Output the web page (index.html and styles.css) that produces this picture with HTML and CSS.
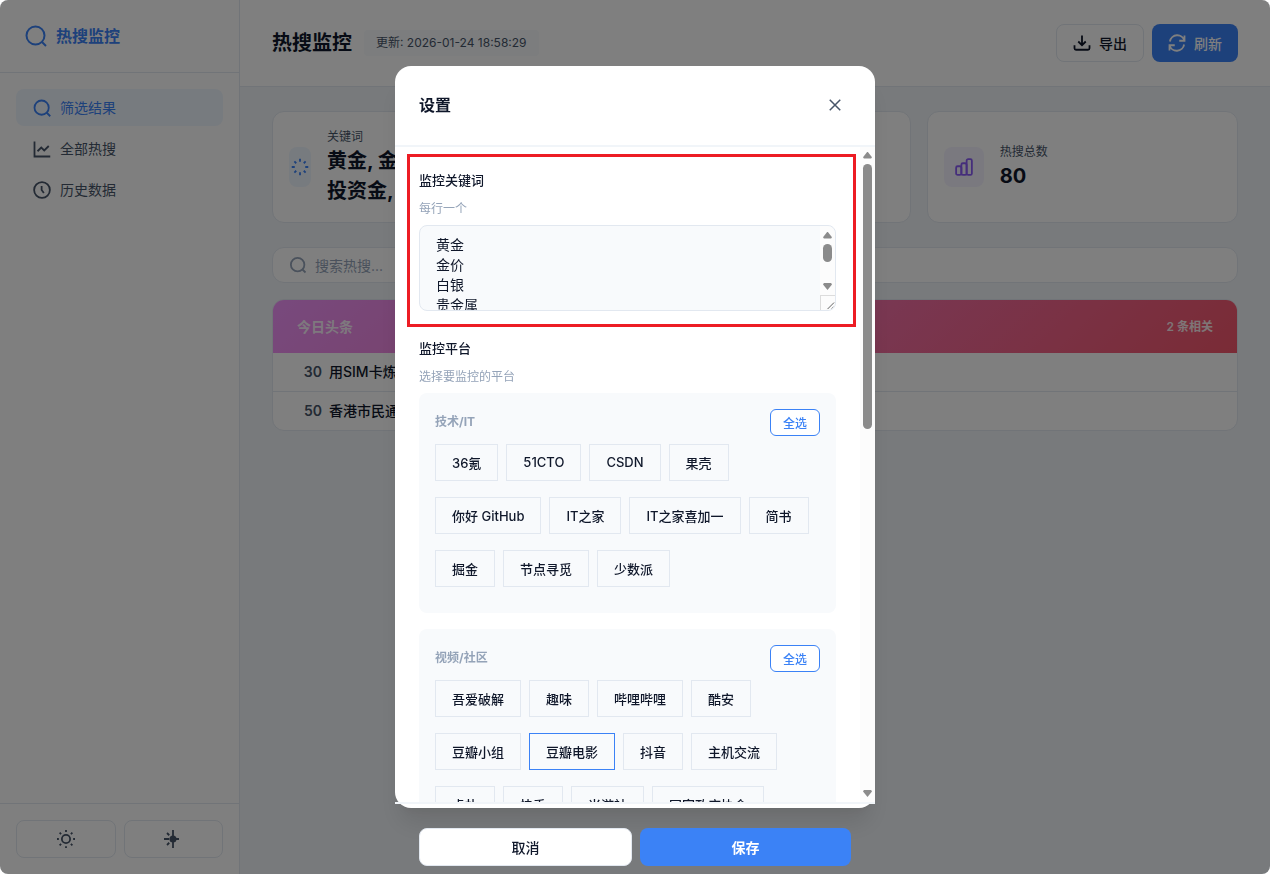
FILE: index.html
```html
<!DOCTYPE html>
<html lang="zh-CN">
<head>
    <meta charset="UTF-8">
    <meta name="viewport" content="width=device-width, initial-scale=1.0">
    <title>热搜监控</title>
    <link rel="stylesheet" href="styles.css">
</head>
<body>
    <div class="app">
        <aside class="sidebar">
            <div class="logo">
                <svg class="logo-icon" viewBox="0 0 24 24"><circle cx="11.5" cy="11.5" r="9"/><path d="M18 18L22 22"/></svg>
                <span>热搜监控</span>
            </div>
            <nav class="nav">
                <a href="#" class="nav-item active">
                    <svg class="icon" viewBox="0 0 24 24"><circle cx="11.5" cy="11.5" r="9.5"/><path d="M18 18L23 23"/></svg>
                    筛选结果
                </a>
                <a href="#" class="nav-item">
                    <svg class="icon" viewBox="0 0 24 24"><path d="M2 2v20h21"/><path d="M6 15l5-5 4 4 6-6"/></svg>
                    全部热搜
                </a>
                <a href="#" class="nav-item">
                    <svg class="icon" viewBox="0 0 24 24"><circle cx="12" cy="12" r="10.5"/><path d="M11.500 6.500v5.500l3 4"/></svg>
                    历史数据
                </a>
            </nav>
            <div class="sidebar-footer">
                <button class="btn tool-btn" aria-label="主题">
                    <svg class="icon" viewBox="0 0 24 24"><circle cx="12" cy="12" r="5.500"/><path d="M12 0v2.500M12 21.500v2.500M0 12h2.500M21.500 12h2.500M3.500 3.500l2 2M18.500 18.500l2 2M3.500 20.500l2-2M18.500 5.500l2-2"/></svg>
                </button>
                <button class="btn tool-btn" aria-label="设置">
                    <svg class="icon" viewBox="0 0 24 24"><circle cx="12" cy="12" r="3.500" fill="currentColor"/><path d="M12 0v24M0 12h7M12 12h8M4 4l3 3M4 20l3-3"/></svg>
                </button>
            </div>
        </aside>

        <main class="main">
            <header class="header">
                <h1>热搜监控</h1>
                <span class="update-time">更新: 2026-01-24 18:58:29</span>
                <div class="header-actions">
                    <button class="btn">
                        <svg class="icon" viewBox="0 0 24 24"><path d="M12 2v13M7 10l5 5 5-5M2 15v4a2 2 0 0 0 2 2h16a2 2 0 0 0 2-2v-4"/></svg>
                        导出
                    </button>
                    <button class="btn btn-primary">
                        <svg class="icon" viewBox="0 0 24 24"><path d="M22 2v7h-7M22 9A10 10 0 0 0 2.500 10M2 22v-7h7M2 15a10 10 0 0 0 19.500-1"/></svg>
                        刷新
                    </button>
                </div>
            </header>

            <div class="content">
                <div class="stats">
                    <div class="stat-card">
                        <div class="stat-icon narrow">
                            <svg class="icon" viewBox="0 0 24 24"><path d="M12 1v4M12 19v4M1 12h4M19 12h4M4.500 4.500L7 7M17 17l2.500 2.500M4.500 19.500L7 17M17 7l2.500-2.500"/></svg>
                        </div>
                        <div>
                            <div class="stat-label">关键词</div>
                            <div class="stat-value">黄金, 金价, 白银, 贵金属,<br>投资金, 金条</div>
                        </div>
                    </div>
                    <div class="stat-card"></div>
                    <div class="stat-card">
                        <div class="stat-icon purple">
                            <svg class="icon" viewBox="0 0 24 24"><rect x="1.500" y="11" width="7" height="11.500" rx="2"/><rect x="8.500" y="7" width="7" height="15.500" rx="2"/><rect x="15.500" y="1.500" width="7" height="21" rx="2"/></svg>
                        </div>
                        <div>
                            <div class="stat-label">热搜总数</div>
                            <div class="stat-value">80</div>
                        </div>
                    </div>
                </div>

                <div class="search">
                    <svg class="icon" viewBox="0 0 24 24"><circle cx="11.5" cy="11.5" r="9"/><path d="M18 18L22 22"/></svg>
                    <input type="text" placeholder="搜索热搜..." aria-label="搜索热搜">
                </div>

                <section class="panel">
                    <div class="panel-header">
                        <h2>今日头条</h2>
                        <span>2 条相关</span>
                    </div>
                    <div class="hot-item"><span class="rank">30</span><a href="#">用SIM卡炼金</a></div>
                    <div class="hot-item"><span class="rank">50</span><a href="#">香港市民通宵</a></div>
                </section>
            </div>
        </main>
    </div>

    <div class="overlay">
        <div class="modal" role="dialog" aria-labelledby="modal-title">
            <div class="modal-header">
                <h3 id="modal-title">设置</h3>
                <button class="close-btn" aria-label="关闭">
                    <svg viewBox="0 0 24 24"><path d="M5 5l14 14M19 5L5 19"/></svg>
                </button>
            </div>
            <div class="modal-scroll">
                <div class="modal-body">
                    <div class="form-group highlight">
                        <label for="keywords">监控关键词</label>
                        <p class="hint">每行一个</p>
                        <div class="textarea-wrap">
                            <textarea id="keywords">黄金
金价
白银
贵金属
投资金</textarea>
                            <div class="scrollbar small" aria-hidden="true">
                                <i class="arrow up"></i>
                                <i class="thumb"></i>
                                <i class="arrow down"></i>
                                <svg class="resizer" viewBox="0 0 15 15"><path d="M7 14l7-7M11 14l3-3"/></svg>
                            </div>
                        </div>
                    </div>
                    <div class="form-group">
                        <div class="label">监控平台</div>
                        <p class="hint">选择要监控的平台</p>
                        <div class="category">
                            <div class="category-header">
                                <h4>技术/IT</h4>
                                <button class="select-all">全选</button>
                            </div>
                            <div class="chips">
                                <button class="chip">36氪</button>
                                <button class="chip">51CTO</button>
                                <button class="chip">CSDN</button>
                                <button class="chip">果壳</button>
                                <button class="chip">你好 GitHub</button>
                                <button class="chip">IT之家</button>
                                <button class="chip">IT之家喜加一</button>
                                <button class="chip">简书</button>
                                <button class="chip">掘金</button>
                                <button class="chip">节点寻觅</button>
                                <button class="chip">少数派</button>
                            </div>
                        </div>
                        <div class="category">
                            <div class="category-header">
                                <h4>视频/社区</h4>
                                <button class="select-all">全选</button>
                            </div>
                            <div class="chips">
                                <button class="chip">吾爱破解</button>
                                <button class="chip">趣味</button>
                                <button class="chip">哔哩哔哩</button>
                                <button class="chip">酷安</button>
                                <button class="chip">豆瓣小组</button>
                                <button class="chip current">豆瓣电影</button>
                                <button class="chip">抖音</button>
                                <button class="chip">主机交流</button>
                                <button class="chip">虎扑</button>
                                <button class="chip">快手</button>
                                <button class="chip">米游社</button>
                                <button class="chip">国家政府协会</button>
                            </div>
                        </div>
                    </div>
                </div>
                <div class="scrollbar" aria-hidden="true">
                    <i class="arrow up"></i>
                    <i class="thumb"></i>
                    <i class="arrow down"></i>
                </div>
            </div>
            <div class="modal-footer">
                <button class="btn">取消</button>
                <button class="btn btn-primary">保存</button>
            </div>
        </div>
    </div>
</body>
</html>
```
FILE: styles.css
```css
* {
    box-sizing: border-box;
    margin: 0;
    padding: 0;
}

body {
    font-family: Inter, "Noto Sans CJK SC", sans-serif;
    font-size: 14px;
    line-height: 20px;
    color: #0f172a;
    background: #fff;
}

button, input, textarea {
    font-family: inherit;
    color: inherit;
}

button {
    cursor: pointer;
}

a {
    color: inherit;
    text-decoration: none;
}

svg {
    fill: none;
    stroke: currentColor;
    stroke-width: 2;
    flex-shrink: 0;
}

.icon {
    width: 18px;
    height: 18px;
    stroke-width: 2.4;
}

.app {
    display: flex;
    height: 100vh;
    background: #f1f5f9;
    border-radius: 8px;
    overflow: hidden;
}

/* sidebar */
.sidebar {
    display: flex;
    flex-direction: column;
    width: 240px;
    flex-shrink: 0;
    background: #fff;
    border-right: 1px solid #e2e8f0;
}

.logo {
    display: flex;
    align-items: center;
    gap: 8px;
    height: 73px;
    padding: 0 24px;
    border-bottom: 1px solid #e2e8f0;
    color: #3b82f6;
    font-size: 16px;
    font-weight: 700;
}

.logo-icon {
    width: 24px;
    height: 24px;
}

.nav {
    flex: 1;
    display: flex;
    flex-direction: column;
    gap: 4px;
    padding: 16px;
}

.nav-item {
    display: flex;
    align-items: center;
    gap: 9px;
    height: 37px;
    padding: 0 17px;
    border-radius: 8px;
    color: #475569;
}

.nav-item.active {
    background: #eff6ff;
    color: #3b82f6;
}

.sidebar-footer {
    display: flex;
    gap: 8px;
    padding: 16px;
    border-top: 1px solid #e2e8f0;
}

.btn {
    display: flex;
    align-items: center;
    justify-content: center;
    gap: 8px;
    height: 38px;
    padding: 0 16px;
    background: #fff;
    border: 1px solid #e2e8f0;
    border-radius: 8px;
    font-size: 14px;
    font-weight: 500;
}

.btn-primary {
    background: #3b82f6;
    border: none;
    color: #fff;
}

.tool-btn {
    flex: 1;
    color: #475569;
}

/* main */
.main {
    flex: 1;
    min-width: 0;
}

.header {
    display: flex;
    align-items: center;
    gap: 12px;
    padding: 24px 32px;
    background: #fff;
    border-bottom: 1px solid #e2e8f0;
}

.header h1 {
    font-size: 20px;
    line-height: 24px;
    font-weight: 700;
}

.update-time {
    padding: 3px 12px;
    background: #f8fafc;
    border-radius: 4px;
    color: #475569;
    font-size: 12px;
}

.header-actions {
    display: flex;
    gap: 8px;
    margin-left: auto;
}

.content {
    padding: 24px 32px;
}

.stats {
    display: grid;
    grid-template-columns: repeat(3, 1fr);
    gap: 16px;
    margin-bottom: 24px;
}

.stat-card {
    display: flex;
    align-items: center;
    gap: 16px;
    padding: 16px;
    background: #fff;
    border: 1px solid #e2e8f0;
    border-radius: 12px;
}

.stat-icon {
    display: flex;
    align-items: center;
    justify-content: center;
    flex-shrink: 0;
    width: 40px;
    height: 40px;
    background: #eff6ff;
    border-radius: 8px;
    color: #3b82f6;
}

.stat-icon.narrow {
    width: 22px;
}

.stat-icon.purple {
    background: #f5f3ff;
    color: #8b5cf6;
}

.stat-label {
    font-size: 12px;
    line-height: 18px;
    color: #475569;
}

.stat-value {
    font-size: 20px;
    line-height: 30px;
    font-weight: 700;
    white-space: nowrap;
}

.search {
    display: flex;
    align-items: center;
    gap: 8px;
    height: 36px;
    padding: 0 16px;
    margin-bottom: 16px;
    background: #fff;
    border: 1px solid #e2e8f0;
    border-radius: 12px;
    color: #94a3b8;
}

.search input {
    flex: 1;
    border: none;
    outline: none;
    background: none;
    font-size: 14px;
}

.search input::placeholder {
    color: #94a3b8;
}

.panel {
    background: #fff;
    border: 1px solid #e2e8f0;
    border-radius: 12px;
    overflow: hidden;
}

.panel-header {
    display: flex;
    align-items: center;
    justify-content: space-between;
    height: 53px;
    padding: 0 24px;
    background: linear-gradient(135deg, #f093fb, #f5576c);
    color: rgba(255, 255, 255, 0.9);
    font-size: 12px;
    font-weight: 600;
}

.panel-header h2 {
    font-size: 14px;
    font-weight: 700;
}

.hot-item {
    display: flex;
    align-items: center;
    box-sizing: content-box;
    height: 38px;
    padding: 0 24px;
    font-weight: 500;
}

.hot-item + .hot-item {
    border-top: 1px solid #e2e8f0;
}

.rank {
    width: 32px;
    padding-right: 7px;
    text-align: right;
    color: #475569;
    font-weight: 600;
}

/* settings dialog */
.overlay {
    position: fixed;
    inset: 0;
    display: flex;
    align-items: center;
    justify-content: center;
    background: rgba(0, 0, 0, 0.5);
    border-radius: 8px;
}

.modal {
    width: 480px;
    height: 85vh;
    background: #fff;
    border-radius: 16px;
    box-shadow: 0 20px 25px -5px rgba(0, 0, 0, 0.1), 0 10px 10px -5px rgba(0, 0, 0, 0.04);
}

.modal-header {
    display: flex;
    align-items: center;
    justify-content: space-between;
    height: 81px;
    padding: 0 24px;
    border-bottom: 2px solid #f1f5f9;
}

.modal-header h3 {
    font-size: 16px;
    font-weight: 600;
}

.close-btn {
    display: flex;
    align-items: center;
    justify-content: center;
    width: 32px;
    height: 32px;
    background: none;
    border: none;
    color: #475569;
}

.close-btn svg {
    width: 18px;
    height: 18px;
}

.modal-scroll {
    display: flex;
    height: 75vh;
}

.modal-body {
    flex: 1;
    padding: 24px;
    overflow: hidden;
}

.form-group {
    position: relative;
    margin-bottom: 28px;
}

/* red frame around the keyword field */
.form-group.highlight::after {
    content: "";
    position: absolute;
    inset: -17px -20px -16px -12px;
    border: 3px solid #ed1c24;
    pointer-events: none;
}

.form-group label,
.label {
    display: block;
    font-size: 13px;
    line-height: 18px;
    font-weight: 500;
}

.hint {
    margin: 10px 0 6px;
    font-size: 12px;
    color: #94a3b8;
}

.textarea-wrap {
    position: relative;
}

textarea {
    display: block;
    width: 100%;
    height: 86px;
    padding: 9px 32px 9px 16px;
    background: #f8fafc;
    border: 1px solid #e2e8f0;
    border-radius: 8px;
    font-size: 14px;
    line-height: 20px;
    overflow: hidden;
    resize: none;
}

.scrollbar {
    display: flex;
    flex-direction: column;
    align-items: center;
    width: 15px;
    padding: 5px 0;
    background: #fcfcfc;
}

.arrow {
    width: 9px;
    height: 7px;
    background: #8b8b8b;
    clip-path: polygon(50% 0, 100% 80%, 90% 100%, 10% 100%, 0 80%);
}

.arrow.down {
    margin-top: auto;
    transform: rotate(180deg);
}

.thumb {
    width: 9px;
    height: 265px;
    margin-top: 5px;
    background: #8b8b8b;
    border-radius: 5px;
}

.scrollbar.small {
    position: absolute;
    top: 1px;
    right: 1px;
    bottom: 1px;
    padding: 6px 0 0;
    border-radius: 0 8px 8px 0;
    overflow: hidden;
}

.small .thumb {
    height: 18px;
}

.resizer {
    width: 15px;
    height: 15px;
    margin-top: 5px;
    border-top: 1px solid #dcdcdc;
    border-left: 1px solid #dcdcdc;
    color: #555;
    stroke-width: 1;
}

.category {
    padding: 16px 16px 26px;
    margin-bottom: 16px;
    background: #f8fafc;
    border-radius: 8px;
}

.category-header {
    display: flex;
    align-items: center;
    justify-content: space-between;
    margin-bottom: 8px;
}

.category-header h4 {
    font-size: 12px;
    font-weight: 700;
    color: #94a3b8;
}

.select-all {
    width: 50px;
    height: 27px;
    background: #fff;
    border: 1px solid #3b82f6;
    border-radius: 6px;
    color: #3b82f6;
    font-size: 12px;
    font-weight: 500;
}

.chips {
    display: flex;
    flex-wrap: wrap;
    gap: 16px 8px;
}

.chip {
    height: 37px;
    padding: 0 16px;
    background: #f8fafc;
    border: 1px solid #e2e8f0;
    font-size: 13px;
    font-weight: 500;
}

.chip.current {
    border-color: #3b82f6;
}

.modal-footer {
    display: flex;
    gap: 8px;
    padding: 24px;
    border-top: 2px solid #f1f5f9;
}

.modal-footer .btn {
    flex: 1;
}

.modal-footer .btn-primary {
    font-weight: 700;
}
```
